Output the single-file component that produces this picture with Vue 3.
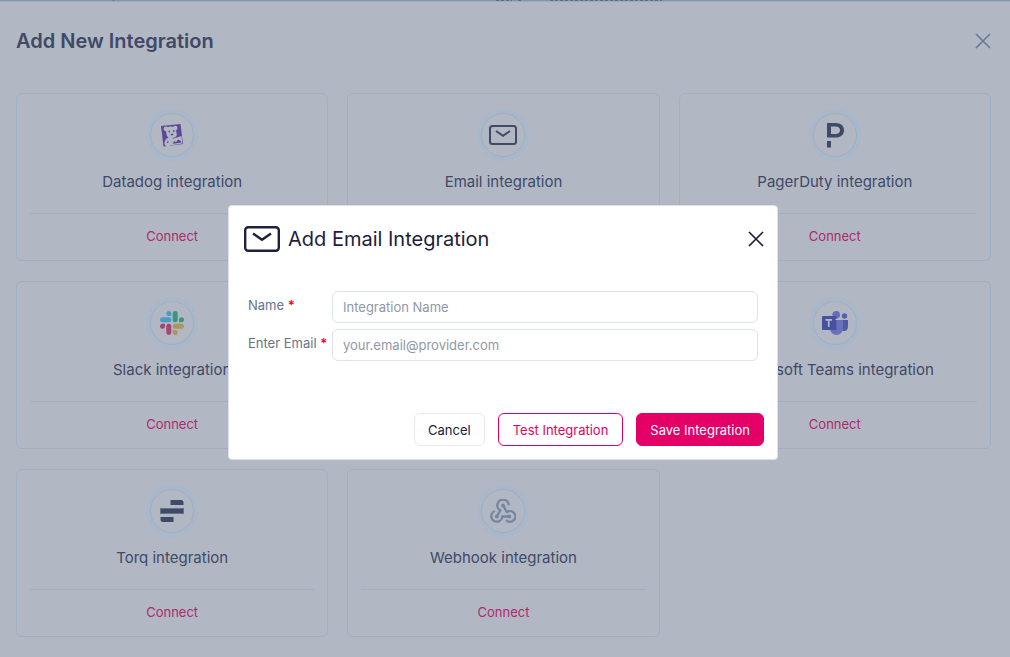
<script setup>
import { ref } from 'vue'

const integrations = [
  { id: 'datadog', name: 'Datadog' },
  { id: 'email', name: 'Email' },
  { id: 'pagerduty', name: 'PagerDuty' },
  { id: 'slack', name: 'Slack' },
  { id: 'jira', name: 'Jira' },
  { id: 'teams', name: 'Microsoft Teams' },
  { id: 'torq', name: 'Torq' },
  { id: 'webhook', name: 'Webhook' },
]

const name = ref('')
const email = ref('')
</script>

<template>
  <div class="page">
    <svg class="page-edge" width="100%" height="2" aria-hidden="true">
      <rect width="100%" height="1" fill="#8592a9" />
      <rect y="1" width="100%" height="1" fill="#a0abbd" />
      <path d="M113 .5h1M496 .5h16M518 .5h4M550 .5h112" fill="none" stroke="#5c6b90" stroke-dasharray="3 2" />
    </svg>
    <main class="panel">
      <header class="panel-head">
        <h1>Add New Integration</h1>
        <button class="icon-button" type="button" aria-label="Close panel">
          <svg width="16" height="16" viewBox="0 0 16 16"><path d="M1 1l14 14M15 1L1 15" stroke="currentColor" stroke-width="1.6" /></svg>
        </button>
      </header>

      <div class="grid">
        <article v-for="item in integrations" :key="item.id" class="card">
          <div class="badge">
            <svg v-if="item.id === 'datadog'" width="24" height="24" viewBox="0 0 24 24">
              <path d="M1 3L20.500 1 23 21 3.500 23.500z" fill="#5e4897" />
              <g fill="#b1b8c4">
                <circle cx="6" cy="5.800" r="2.400" /><circle cx="15.300" cy="5" r="2.200" />
                <path d="M6 6c1-2 3-2.500 5-2.500s4.500 1 5 3.500l.8 4.500c0 2-1.500 3-3.500 3.200L10 15c-2 0-3.300-1.800-3.600-4z" />
                <path d="M7.500 15l3-1.500 3 2-1 6L9 23.500c-2 .5-4-.5-4.500-2.500-.5-2.500 1-4.500 3-6z" />
                <path d="M10.500 16.500l11-3.500.8 7.500-10.800 1.700z" />
              </g>
              <path d="M12.500 20.800l1.700-2.800 1.800 1.300 2-2.800 3 1.500v1.800z" fill="#5e4897" />
              <path d="M8.500 8.500h1.600M13 8h1.600M10.800 11.500h2.400M7 19.500l1.500-1" fill="none" stroke="#5e4897" stroke-width="1.300" />
            </svg>
            <svg v-else-if="item.id === 'email'" width="28" height="20" viewBox="0 0 28 20" fill="none" stroke="#404966" stroke-width="2">
              <rect x="1" y="1" width="26" height="18" rx="2.500" /><path d="M7 6l7 4.800L21 6" />
            </svg>
            <svg v-else-if="item.id === 'pagerduty'" width="18" height="25" viewBox="0 0 18 25">
              <path d="M1 18h4v6.500H1zM1 0h8.500C15 0 18 3 18 7.300S15 14.600 9.500 14.600H1zM5 3.600V11h4.500c3 0 4.500-1.300 4.500-3.700S12.500 3.600 9.500 3.600z" fill="#404966" fill-rule="evenodd" />
            </svg>
            <svg v-else-if="item.id === 'slack'" width="24" height="24" viewBox="0 0 24 24">
              <path d="M8.800 0a2.500 2.500 0 0 0 0 5h2.500V2.500A2.500 2.500 0 0 0 8.800 0zM2.500 6.300h6.300a2.500 2.500 0 0 1 0 5H2.500a2.500 2.500 0 0 1 0-5z" fill="#4a9cc5" />
              <path d="M24 8.800a2.500 2.500 0 0 0-5 0v2.500h2.500A2.500 2.500 0 0 0 24 8.800zM17.700 2.500v6.300a2.500 2.500 0 0 1-5 0V2.500a2.500 2.500 0 0 1 5 0z" fill="#3c967f" />
              <path d="M15.200 24a2.500 2.500 0 0 0 0-5h-2.500v2.500a2.500 2.500 0 0 0 2.500 2.500zM21.500 17.700h-6.300a2.500 2.500 0 0 1 0-5h6.300a2.500 2.500 0 0 1 0 5z" fill="#ac955e" />
              <path d="M0 15.200a2.500 2.500 0 0 0 5 0v-2.500H2.500A2.500 2.500 0 0 0 0 15.200zM6.300 21.500v-6.300a2.500 2.500 0 0 1 5 0v6.300a2.500 2.500 0 0 1-5 0z" fill="#a74470" />
            </svg>
            <svg v-else-if="item.id === 'teams'" width="26" height="24" viewBox="0 0 26 24">
              <circle cx="22.500" cy="5" r="2.700" fill="#565fac" /><circle cx="14.200" cy="3.800" r="3.800" fill="#646cb9" />
              <path d="M18 9h8v6.500c0 3-2 4.500-4 4.500s-4-1.500-4-4.500z" fill="#5059a7" />
              <path d="M8 9h13v8c0 4-3 7-6.500 7S8 21 8 17z" fill="#6971bd" />
              <path d="M8 9h6.500v10H8zM11 5h3.500v3H11z" fill="#4e5698" />
              <rect y="5" width="13.500" height="14" rx="1" fill="#48519c" />
              <path d="M3.500 8.800h6.500M6.750 9v7" stroke="#afb8d0" stroke-width="1.700" />
            </svg>
            <svg v-else-if="item.id === 'torq'" width="24" height="24" viewBox="0 0 24 24" fill="#404966">
              <path d="M10.500 1H21a2.500 2.500 0 0 1 2.500 2.500V6h-13z" /><rect y="9" width="24" height="6" fill="#667087" /><rect x="1" y="10" width="22" height="4" />
              <path d="M.5 18h13v5H3A2.500 2.500 0 0 1 .5 20.500z" />
            </svg>
            <svg v-else-if="item.id === 'webhook'" width="26" height="24" viewBox="0 0 26 24" fill="none" stroke="#76859f" stroke-width="2.300">
              <path d="M18.700 6.300a5.700 5.700 0 1 0-8.300 5.100L6.800 17.500" />
              <path d="M5 12a5.500 5.500 0 1 0 7.300 5.500h7" />
              <path d="M13 6.400l4 6.700a5.300 5.300 0 1 1-.8 8" />
              <g fill="#76859f" stroke="none"><circle cx="13" cy="6.400" r="1.900" /><circle cx="6.800" cy="17.500" r="1.900" /><circle cx="19.300" cy="17.500" r="1.900" /></g>
            </svg>
          </div>
          <h2>{{ item.name }} integration</h2>
          <div class="card-foot"><button class="connect" type="button">Connect</button></div>
        </article>
      </div>
    </main>

    <div class="overlay">
      <form class="dialog" role="dialog" aria-labelledby="dialog-title" @submit.prevent>
        <header class="dialog-head">
          <svg width="36" height="26" viewBox="0 0 36 26" fill="none" stroke="#1d213d" stroke-width="2.400">
            <rect x="1.200" y="1.200" width="33.600" height="23.600" rx="3" /><path d="M9 7.500l9 6.300 9-6.300" />
          </svg>
          <h2 id="dialog-title">Add Email Integration</h2>
          <button class="icon-button dark" type="button" aria-label="Close dialog">
            <svg width="16" height="16" viewBox="0 0 16 16"><path d="M1 1l14 14M15 1L1 15" stroke="currentColor" stroke-width="1.700" /></svg>
          </button>
        </header>
        <div class="fields">
          <label for="integration-name">Name <span>*</span></label>
          <input id="integration-name" v-model="name" type="text" placeholder="Integration Name" />
          <label for="integration-email">Enter Email <span>*</span></label>
          <input id="integration-email" v-model="email" type="email" placeholder="your.email@provider.com" />
        </div>
        <footer class="actions">
          <button class="action" type="button">Cancel</button>
          <button class="action outline" type="button">Test Integration</button>
          <button class="action primary" type="submit">Save Integration</button>
        </footer>
      </form>
    </div>
  </div>
</template>

<style>
body { background: #b1b8c4; }
</style>

<style scoped>
.page, .page * { box-sizing: border-box; }
.page {
  font-family: Inter, "Liberation Sans", sans-serif;
  min-height: 100vh;
  background: #b1b8c4;
  color: #404966;
}
h1, h2 { margin: 0; }
button, input { font: inherit; }
button { cursor: pointer; }
.page-edge { display: block; }
.panel { padding: 24px 19px 20px 16px; }
.panel-head { display: flex; align-items: center; justify-content: space-between; height: 30px; margin-bottom: 37px; }
h1 { font-size: 20px; font-weight: 600; line-height: 30px; }
.icon-button { display: flex; padding: 0; border: 0; background: none; color: #69789a; }
.icon-button.dark { color: #1d213d; margin-left: auto; }
.grid { display: grid; grid-template-columns: repeat(3, 1fr); gap: 20px 19px; }
.card {
  display: flex;
  flex-direction: column;
  align-items: center;
  height: 168px;
  padding: 19px 13px 0;
  border: 1px solid #a2afc0;
  border-radius: 6px;
}
.badge {
  display: flex;
  align-items: center;
  justify-content: center;
  width: 44px;
  height: 44px;
  border: 1px solid #a1aec0;
  border-radius: 50%;
  box-shadow: 0 0 0 4px #a9b7cb;
}
.card h2 { margin-top: 15px; font-size: 15px; font-weight: 400; line-height: 20px; white-space: nowrap; }
.card-foot { align-self: stretch; margin-top: 21px; padding-top: 11px; border-top: 1px solid #a2afc0; text-align: center; }
.connect { padding: 0; border: 0; background: none; color: #ae2a6a; font-size: 13px; line-height: 20px; }
.overlay {
  position: fixed;
  inset: 0;
  display: flex;
  align-items: center;
  justify-content: center;
  padding: 8px 4px 0 0;
}
.dialog {
  width: 550px;
  max-width: 100%;
  padding: 18px 13px 13px 15px;
  border: 1px solid #dce2ec;
  border-radius: 4px;
  background: #fff;
  color: #1d213d;
}
.dialog-head { display: flex; align-items: center; gap: 8px; height: 30px; }
.dialog-head h2 { font-size: 20px; font-weight: 400; line-height: 30px; }
.fields {
  display: grid;
  grid-template-columns: 78px 1fr;
  gap: 6px;
  margin: 37px 6px 52px 4px;
}
label { padding-top: 4px; color: #64748b; font-size: 13px; line-height: 20px; white-space: nowrap; }
label span { color: #f0002f; font-weight: 600; }
input {
  width: 100%;
  height: 32px;
  padding: 0 10px;
  border: 1px solid #dce4ef;
  border-radius: 6px;
  background: #fff;
  color: #1d213d;
  font-size: 13px;
}
input::placeholder { color: #8f98a8; opacity: 1; }
.actions { display: flex; justify-content: flex-end; gap: 13px; }
.action {
  height: 33px;
  padding: 0 13px;
  border: 1px solid #e9e9f5;
  border-radius: 6px;
  background: #fff;
  color: #1d213d;
  font-size: 13px;
  line-height: 20px;
  white-space: nowrap;
}
.outline { padding: 0 14px; border-color: #e20067; color: #e20067; }
.primary { border-color: #e50068; background: #e50068; color: #fff; }
</style>
